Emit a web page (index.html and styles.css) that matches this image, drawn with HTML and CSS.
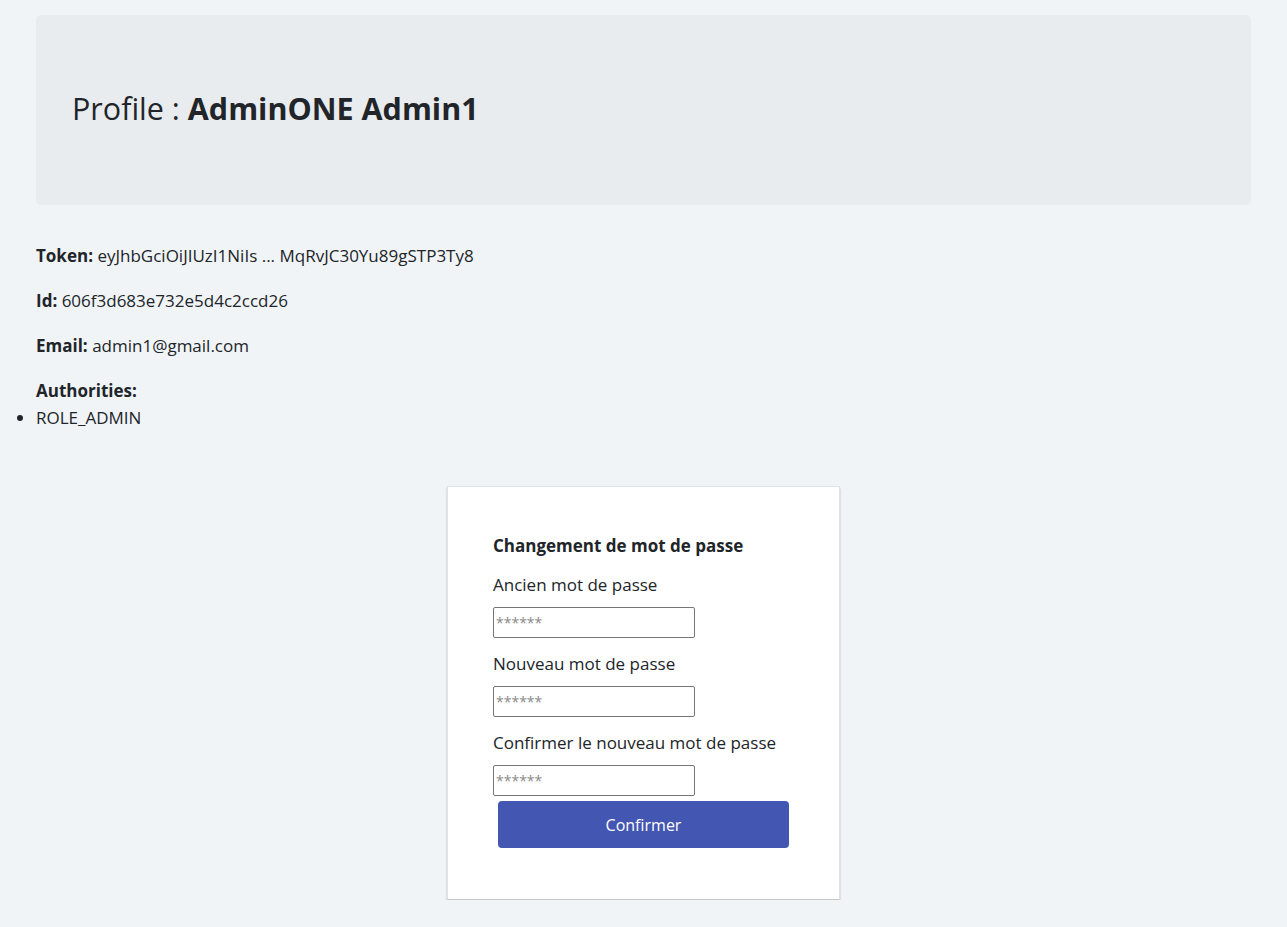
FILE: index.html
```html
<!DOCTYPE html>
<html lang="fr">
<head>
<meta charset="utf-8">
<title>Profile</title>
<link rel="stylesheet" href="styles.css">
</head>
<body>
<div class="page">
  <header class="jumbotron">
    <h2 class="title">Profile : <strong>AdminONE Admin1</strong></h2>
  </header>
  <p class="info"><strong>Token:</strong> eyJhbGciOiJIUzI1NiIs ... MqRvJC30Yu89gSTP3Ty8</p>
  <p class="info"><strong>Id:</strong> 606f3d683e732e5d4c2ccd26</p>
  <p class="info"><strong>Email:</strong> admin1@gmail.com</p>
  <strong class="auth-title">Authorities:</strong>
  <ul class="roles">
    <li>ROLE_ADMIN</li>
  </ul>
  <div class="card-wrap">
    <form class="card">
      <div class="card-title">Changement de mot de passe</div>
      <label class="label">Ancien mot de passe</label>
      <input class="input" type="password" placeholder="******">
      <label class="label">Nouveau mot de passe</label>
      <input class="input" type="password" placeholder="******">
      <label class="label">Confirmer le nouveau mot de passe</label>
      <input class="input last" type="password" placeholder="******">
      <button class="btn" type="button">Confirmer</button>
    </form>
  </div>
</div>
</body>
</html>
```
FILE: styles.css
```css
* { box-sizing: border-box; }
html, body { margin: 0; padding: 0; }
body {
  background: #f0f4f7;
  color: #212529;
  font-family: "Open Sans", "Noto Sans", sans-serif;
  font-size: 17px;
}
.page {
  padding: 15px 36px 0 36px;
}
.jumbotron {
  background: #e9ecef;
  border-radius: 5px;
  height: 190px;
  display: flex;
  align-items: center;
  padding: 0 36px;
  margin-bottom: 37px;
}
.title {
  margin: 0 0 4px 0;
  font-size: 30.5px;
  font-weight: 400;
  line-height: 36px;
}
.title strong { font-weight: 700; }
.info {
  margin: 0 0 18px 0;
  line-height: 27px;
}
.info strong, .auth-title { font-weight: 700; }
.auth-title { display: block; line-height: 27px; }
.roles {
  margin: 0;
  padding-left: 0;
  line-height: 27px;
}
.roles li { margin-left: 0; list-style-position: outside; }
.card-wrap {
  display: flex;
  justify-content: center;
  padding-top: 55px;
}
.card {
  width: 393px;
  background: #fff;
  border: 1px solid #dee2e6;
  border-bottom-color: #c4c8cc;
  box-shadow: 0 2px 2px rgba(0,0,0,0.22);
  padding: 48px 45px 51px 45px;
  display: flex;
  flex-direction: column;
  align-items: flex-start;
}
.card-title {
  font-weight: 700;
  font-size: 17px;
  line-height: 22px;
  margin-bottom: 16px;
}
.label {
  font-size: 17px;
  line-height: 24px;
  margin-bottom: 10px;
}
.input {
  width: 202px;
  height: 31px;
  border: 1px solid #767676;
  border-radius: 2px;
  padding: 1px 2px;
  font-family: inherit;
  font-size: 14px;
  margin: 0 0 14px 0;
  background: #fff;
}
.input::placeholder { color: #8a8a8a; }
.input.last { margin-bottom: 5px; }
.btn {
  margin-left: 5px;
  width: 291px;
  height: 47px;
  background: #4356b1;
  color: #fff;
  border: none;
  border-radius: 4px;
  font-family: inherit;
  font-size: 16px;
}
```
